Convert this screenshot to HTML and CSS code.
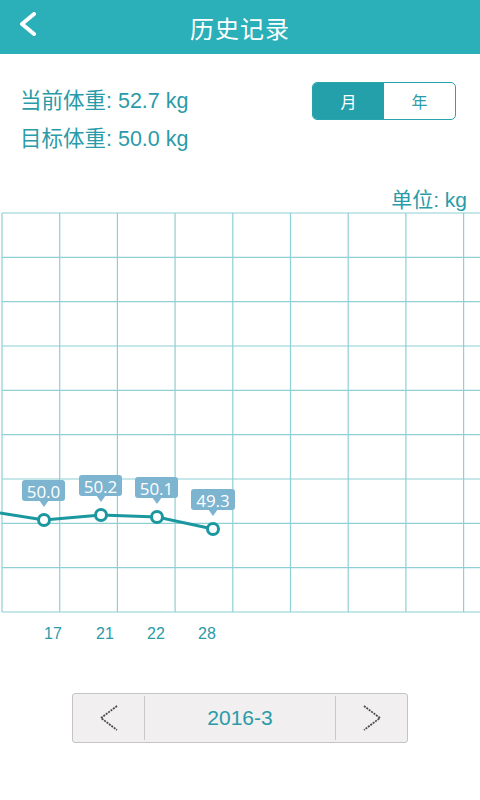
FILE: index.html
```html
<!DOCTYPE html>
<html>
<head>
<meta charset="utf-8">
<link rel="stylesheet" href="styles.css">
</head>
<body>
<div class="header">
  <svg class="back" width="20" height="26" viewBox="0 0 20 26"><polyline points="16,2 4,12 16,22" fill="none" stroke="#fff" stroke-width="4" stroke-linecap="round" stroke-linejoin="round"/></svg>
  <div class="title">历史记录</div>
</div>
<div class="info">
  <div class="weights">
    <div class="line">当前体重: 52.7 kg</div>
    <div class="line">目标体重: 50.0 kg</div>
  </div>
  <div class="toggle">
    <div class="tab active">月</div>
    <div class="tab">年</div>
  </div>
</div>
<div class="unit">单位: kg</div>
<svg class="chart" width="480" height="440" viewBox="0 0 480 440">
  <g stroke="#8ed0d6" stroke-width="1.2">
    <line x1="2" y1="2" x2="480" y2="2"/>
    <line x1="2" y1="46.3" x2="480" y2="46.3"/>
    <line x1="2" y1="90.7" x2="480" y2="90.7"/>
    <line x1="2" y1="135" x2="480" y2="135"/>
    <line x1="2" y1="179.3" x2="480" y2="179.3"/>
    <line x1="2" y1="223.7" x2="480" y2="223.7"/>
    <line x1="2" y1="268" x2="480" y2="268"/>
    <line x1="2" y1="312.3" x2="480" y2="312.3"/>
    <line x1="2" y1="356.7" x2="480" y2="356.7"/>
    <line x1="2" y1="401" x2="480" y2="401"/>
    <line x1="2" y1="2" x2="2" y2="401"/>
    <line x1="59.7" y1="2" x2="59.7" y2="401"/>
    <line x1="117.4" y1="2" x2="117.4" y2="401"/>
    <line x1="175.1" y1="2" x2="175.1" y2="401"/>
    <line x1="232.8" y1="2" x2="232.8" y2="401"/>
    <line x1="290.5" y1="2" x2="290.5" y2="401"/>
    <line x1="348.2" y1="2" x2="348.2" y2="401"/>
    <line x1="405.9" y1="2" x2="405.9" y2="401"/>
    <line x1="463.6" y1="2" x2="463.6" y2="401"/>
  </g>
  <polyline points="0,302 44,309 101,304 157,306 213,318" fill="none" stroke="#1b989f" stroke-width="3"/>
  <g fill="#fff" stroke="#1b989f" stroke-width="3">
    <circle cx="44" cy="309" r="5.5"/>
    <circle cx="101" cy="304" r="5.5"/>
    <circle cx="157" cy="306" r="5.5"/>
    <circle cx="213" cy="318" r="5.5"/>
  </g>
  <g fill="#7db4cf">
    <rect x="22" y="269" width="43" height="21" rx="3"/><polygon points="39,289 49,289 44,296"/>
    <rect x="79" y="264" width="43" height="21" rx="3"/><polygon points="96,284 106,284 101,291"/>
    <rect x="135" y="266" width="43" height="21" rx="3"/><polygon points="152,286 162,286 157,293"/>
    <rect x="191" y="278" width="44" height="21" rx="3"/><polygon points="208,298 218,298 213,305"/>
  </g>
  <g class="tip" fill="#fff" text-anchor="middle">
    <text x="43.5" y="286.5">50.0</text>
    <text x="100.5" y="281.5">50.2</text>
    <text x="156.5" y="283.5">50.1</text>
    <text x="213" y="295.5">49.3</text>
  </g>
  <g class="xl" fill="#2a9ba9" text-anchor="middle">
    <text x="53" y="428">17</text>
    <text x="105" y="428">21</text>
    <text x="156" y="428">22</text>
    <text x="207" y="428">28</text>
  </g>
</svg>
<div class="pager">
  <div class="arrow">
    <svg width="20" height="26" viewBox="0 0 20 26"><polyline points="18,1 2,13 18,25" fill="none" stroke="#4a4a4a" stroke-width="1.8" stroke-dasharray="2 1"/></svg>
  </div>
  <div class="month">2016-3</div>
  <div class="arrow">
    <svg width="20" height="26" viewBox="0 0 20 26"><polyline points="2,1 18,13 2,25" fill="none" stroke="#4a4a4a" stroke-width="1.8" stroke-dasharray="2 1"/></svg>
  </div>
</div>
</body>
</html>
```
FILE: styles.css
```css
body {
  margin: 0;
  background: #fff;
  font-family: "Liberation Sans", "Noto Sans CJK SC", sans-serif;
  width: 480px;
  overflow: hidden;
}
.header {
  height: 54px;
  background: #2bafb8;
  display: flex;
  align-items: center;
  justify-content: center;
  position: relative;
}
.back {
  position: absolute;
  left: 18px;
  top: 12px;
}
.title {
  color: #fff;
  font-size: 24px;
  font-family: "Noto Sans CJK SC", sans-serif;
  letter-spacing: 1px;
}
.info {
  display: flex;
  justify-content: space-between;
  align-items: flex-start;
  padding: 28px 24px 0 20px;
}
.line {
  color: #2a9ba9;
  font-size: 21.5px;
  line-height: 38px;
}
.toggle {
  display: flex;
  width: 142px;
  height: 36px;
  border: 1px solid #2aa3ad;
  border-radius: 5px;
  overflow: hidden;
}
.tab {
  flex: 1;
  display: flex;
  align-items: center;
  justify-content: center;
  font-size: 16px;
  color: #2a9ba9;
  font-family: "Noto Sans CJK SC", sans-serif;
}
.tab.active {
  background: #24a0aa;
  color: #fff;
}
.unit {
  margin-top: 31px;
  text-align: right;
  padding-right: 13px;
  color: #2a9ba9;
  font-size: 21px;
  line-height: 22px;
}
.chart {
  display: block;
}
.tip {
  font-family: "Open Sans", sans-serif;
  font-size: 17px;
}
.xl {
  font-family: "Liberation Sans", sans-serif;
  font-size: 16px;
}
.pager {
  margin: 42px 0 0 72px;
  width: 334px;
  height: 48px;
  border: 1px solid #c4c4c4;
  border-radius: 3px;
  background: #f1efef;
  display: flex;
}
.arrow {
  width: 71px;
  display: flex;
  align-items: center;
  justify-content: center;
}
.month {
  flex: 1;
  border-left: 1px solid #c9c9c9;
  border-right: 1px solid #c9c9c9;
  margin: 2px 0;
  display: flex;
  align-items: center;
  justify-content: center;
  color: #2a9ba9;
  font-size: 21px;
}
```
